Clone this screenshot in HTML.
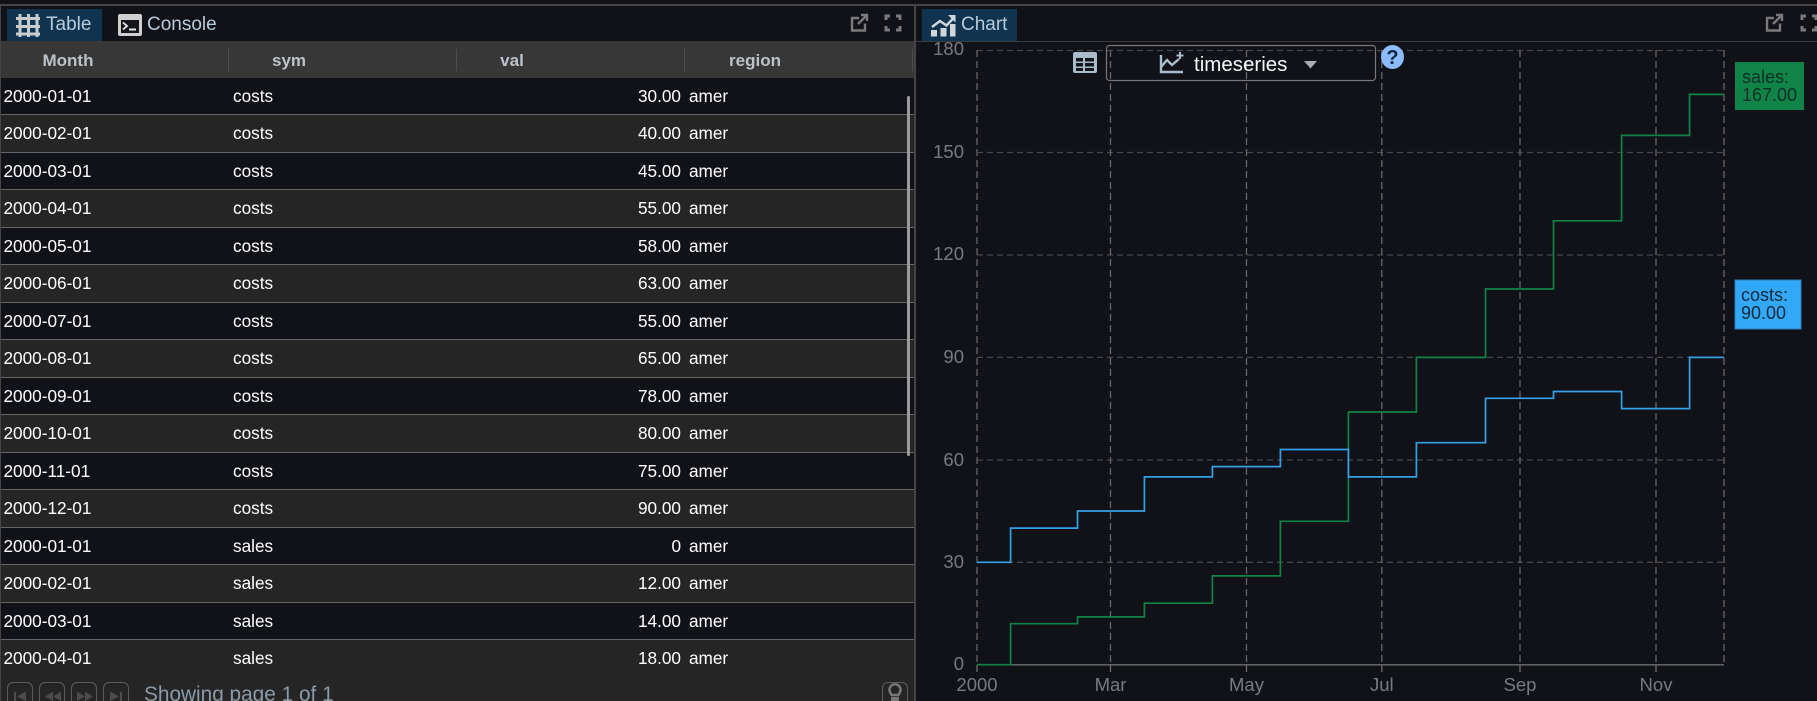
<!DOCTYPE html>
<html><head><meta charset="utf-8"><style>
html,body{margin:0;padding:0;width:1817px;height:701px;overflow:hidden;background:#101218}
body{position:relative;font-family:"Liberation Sans",sans-serif;color:#fff}
.a{position:absolute}
.tab{position:absolute;top:9px;height:32px;line-height:32px;font-size:19px;color:#b6cbdc;white-space:nowrap}
.r{position:absolute;left:1px;width:913px;height:37.5px;box-sizing:border-box;border-top:1px solid #666;background:#101218}
.r.e{background:#252525}
.r span{position:absolute;top:1px;line-height:35px;font-size:17.2px;color:#fff;white-space:nowrap}
.r .d{left:2.5px}.r .s{left:232px}.r .v{right:233px}.r .g{left:688px}
.h{position:absolute;top:42px;height:37px;line-height:37px;font-size:17px;font-weight:bold;color:#bcc2c8;text-align:center;width:228px}
.sep{position:absolute;top:49px;height:22px;width:1px;background:#4d4d4d}
.pb{position:absolute;top:682px;width:24px;height:30px;border:1px solid #5a5a5a;border-radius:6px}
svg{position:absolute;left:0;top:0}
</style></head><body>
<div class="a" style="left:0;top:4px;width:1817px;height:2px;background:#444"></div>
<div class="a" style="left:0;top:6px;width:1px;height:695px;background:#444"></div>
<div class="a" style="left:914px;top:6px;width:2px;height:695px;background:#444"></div>
<div class="a" style="left:916px;top:41px;width:901px;height:1px;background:#3c3c3c"></div>

<div class="a" style="left:7px;top:9px;width:95px;height:32px;background:#10344f"></div>
<div class="a" style="left:922px;top:9px;width:95px;height:32px;background:#10344f"></div>
<div class="tab" style="left:46px">Table</div>
<div class="tab" style="left:147px">Console</div>
<div class="tab" style="left:961px">Chart</div>

<div class="a" style="left:1px;top:41px;width:913px;height:37px;background:#373737"></div>
<div class="h" style="left:-46px">Month</div>
<div class="h" style="left:175px">sym</div>
<div class="h" style="left:398px">val</div>
<div class="h" style="left:641px">region</div>
<div class="sep" style="left:228px"></div><div class="sep" style="left:456px"></div><div class="sep" style="left:684px"></div><div class="sep" style="left:912px"></div>

<div class="r" style="top:78px;height:36px;border-top:0"><span class="d">2000-01-01</span><span class="s">costs</span><span class="v">30.00</span><span class="g">amer</span></div>
<div class="r e" style="top:114px"><span class="d">2000-02-01</span><span class="s">costs</span><span class="v">40.00</span><span class="g">amer</span></div>
<div class="r" style="top:151.5px"><span class="d">2000-03-01</span><span class="s">costs</span><span class="v">45.00</span><span class="g">amer</span></div>
<div class="r e" style="top:189px"><span class="d">2000-04-01</span><span class="s">costs</span><span class="v">55.00</span><span class="g">amer</span></div>
<div class="r" style="top:226.5px"><span class="d">2000-05-01</span><span class="s">costs</span><span class="v">58.00</span><span class="g">amer</span></div>
<div class="r e" style="top:264px"><span class="d">2000-06-01</span><span class="s">costs</span><span class="v">63.00</span><span class="g">amer</span></div>
<div class="r" style="top:301.5px"><span class="d">2000-07-01</span><span class="s">costs</span><span class="v">55.00</span><span class="g">amer</span></div>
<div class="r e" style="top:339px"><span class="d">2000-08-01</span><span class="s">costs</span><span class="v">65.00</span><span class="g">amer</span></div>
<div class="r" style="top:376.5px"><span class="d">2000-09-01</span><span class="s">costs</span><span class="v">78.00</span><span class="g">amer</span></div>
<div class="r e" style="top:414px"><span class="d">2000-10-01</span><span class="s">costs</span><span class="v">80.00</span><span class="g">amer</span></div>
<div class="r" style="top:451.5px"><span class="d">2000-11-01</span><span class="s">costs</span><span class="v">75.00</span><span class="g">amer</span></div>
<div class="r e" style="top:489px"><span class="d">2000-12-01</span><span class="s">costs</span><span class="v">90.00</span><span class="g">amer</span></div>
<div class="r" style="top:526.5px"><span class="d">2000-01-01</span><span class="s">sales</span><span class="v">0</span><span class="g">amer</span></div>
<div class="r e" style="top:564px"><span class="d">2000-02-01</span><span class="s">sales</span><span class="v">12.00</span><span class="g">amer</span></div>
<div class="r" style="top:601.5px"><span class="d">2000-03-01</span><span class="s">sales</span><span class="v">14.00</span><span class="g">amer</span></div>
<div class="r e" style="top:639px;height:62px"><span class="d">2000-04-01</span><span class="s">sales</span><span class="v">18.00</span><span class="g">amer</span></div>

<div class="a" style="left:907px;top:96px;width:3px;height:360px;background:#9a9a9a;border-radius:2px"></div>

<div class="pb" style="left:7px"></div><div class="pb" style="left:39px"></div><div class="pb" style="left:71px"></div><div class="pb" style="left:103px"></div>
<div class="pb" style="left:882px"></div>
<div class="a" style="left:144px;top:683px;font-size:20.8px;line-height:24px;color:#8a9aa8;white-space:nowrap">Showing page 1 of 1</div>

<svg width="1817" height="701" viewBox="0 0 1817 701" font-family="'Liberation Sans',sans-serif">
<!-- pager glyphs -->
<g fill="#4c4c4c">
<path d="M14 692h2v9h-2zM17 696.500l9-5v9.500z"/>
<path d="M45 696.500l8-5v9.500zM53 696.500l8-5v9.500z"/>
<path d="M77 691.500l8 5-8 4.500zM85 691.500l8 5-8 4.500z"/>
<path d="M110 691.500l9 5-9 4.500zM120 692h2v9h-2z"/>
</g>
<path d="M890 692a5.500 5.500 0 1 1 10 0l-1.500 3h-7z" fill="none" stroke="#777" stroke-width="2.500"/>
<path d="M891 697h8v4h-8z" fill="#777"/>

<!-- grid tab icon -->
<g stroke="#c9cdd0" stroke-width="3" fill="none">
<path d="M20 14v23M28.500 14v23M37 14v23M16 18.500h24M16 26.500h24M16 34h24"/>
</g>
<!-- console icon -->
<rect x="118" y="14" width="24" height="22" rx="2" fill="#cfcfcf"/>
<rect x="121" y="20" width="18" height="13" fill="#14161b"/>
<path d="M123 22.500l4 3.500-4 3.500" stroke="#e8e8e8" stroke-width="1.800" fill="none"/>
<path d="M129 29.500h7" stroke="#e8e8e8" stroke-width="2"/>
<!-- chart tab icon -->
<g fill="#d2d6d9">
<rect x="931" y="30" width="6" height="6.500"/>
<rect x="940.500" y="28" width="6" height="8.500"/>
<rect x="950" y="24" width="5.500" height="12.500"/>
</g>
<path d="M932 27l8-6 6.500 4.500 8-8.500" fill="none" stroke="#d2d6d9" stroke-width="2.500"/>
<path d="M948 15h7.500v7.500z" fill="#d2d6d9"/>

<!-- external / fullscreen -->
<g fill="none" stroke="#7a7a7a" stroke-width="2.400">
<path d="M859 18h-7v12.500h13v-7M858 24l9-9M861 15h6v6"/>
<path d="M886 20v-4h4M896 16h4v4M900 26v4h-4M890 30h-4v-4" stroke-width="3"/>
<path d="M1774 18h-7v12.500h13v-7M1773 24l9-9M1776 15h6v6"/>
<path d="M1802 20v-4h4M1812 16h4v4M1816 26v4h-4M1806 30h-4v-4" stroke-width="3"/>
</g>

<!-- grid -->
<g stroke="#474747" stroke-width="1.300" stroke-dasharray="6 4" fill="none">
<path d="M977 50.500H1724M977 152.500H1724M977 255H1724M977 357.400H1724M977 460H1724M977 562.300H1724"/>
</g>
<g stroke="#666" stroke-width="1.300" stroke-dasharray="7 4" fill="none">
<path d="M977 50V665M1110.500 50V665M1246.500 50V665M1381.800 50V665M1520 50V665M1656 50V665M1724 50V665"/>
</g>
<path d="M977 664.800H1724" stroke="#6e6e6e" stroke-width="1.400"/>
<path d="M977 665v7M1110.500 665v7M1246.500 665v7M1381.800 665v7M1520 665v7M1656 665v7" stroke="#6e6e6e" stroke-width="1.300"/>

<!-- axis labels -->
<g fill="#777b80" font-size="18.500" text-anchor="end">
<text x="964" y="55">180</text>
<text x="964" y="158">150</text>
<text x="964" y="260">120</text>
<text x="964" y="363">90</text>
<text x="964" y="466">60</text>
<text x="964" y="568">30</text>
<text x="964" y="670">0</text>
</g>
<g fill="#777b80" font-size="18.500" text-anchor="middle">
<text x="977" y="691">2000</text>
<text x="1110.500" y="691">Mar</text>
<text x="1246.500" y="691">May</text>
<text x="1381.800" y="691">Jul</text>
<text x="1520" y="691">Sep</text>
<text x="1656" y="691">Nov</text>
</g>

<!-- series -->
<path fill="none" stroke="#0f8446" stroke-width="1.700" d="M977 664.700H1010.600V623.700H1077.500V616.900H1144.400V603.200H1212.400V575.900H1280.400V521.300H1348.400V412H1416.400V357.400H1485.500V289H1553.500V220.800H1621.600V135.400H1689.600V94.400H1724"/>
<path fill="none" stroke="#34a0e8" stroke-width="1.700" d="M977 562.300H1010.600V528.100H1077.500V511H1144.400V476.900H1212.400V466.600H1280.400V449.500H1348.400V476.900H1416.400V442.700H1485.500V398.300H1553.500V391.500H1621.600V408.600H1689.600V357.400H1724"/>

<!-- toolbar -->
<rect x="1073" y="52" width="24" height="21" rx="2" fill="#a9bccb"/>
<g fill="#14161b">
<rect x="1076" y="58" width="7" height="3.500"/><rect x="1085" y="58" width="9" height="3.500"/>
<rect x="1076" y="63" width="7" height="3.500"/><rect x="1085" y="63" width="9" height="3.500"/>
<rect x="1076" y="68" width="7" height="3"/><rect x="1085" y="68" width="9" height="3"/>
</g>
<rect x="1106.500" y="45.500" width="269" height="35" rx="3" fill="none" stroke="#777" stroke-width="1.200"/>
<g fill="none" stroke="#a9bccb" stroke-width="2.400">
<path d="M1161 55v17h22"/>
<path d="M1161 67l6-7 5 5 7-6"/>
<path d="M1180 52v7M1176.500 55.500h7" stroke-width="2"/>
</g>
<text x="1194" y="71" font-size="20.500" fill="#f4f6f8">timeseries</text>
<path d="M1304 61h13l-6.500 7.500z" fill="#a8adb2"/>
<ellipse cx="1392.500" cy="57" rx="11.500" ry="12" fill="#8bbcff"/>
<text x="1392.500" y="64" font-size="20" font-weight="bold" fill="#10233f" text-anchor="middle">?</text>

<!-- value labels -->
<rect x="1735" y="62" width="69" height="48" fill="#0f8446"/>
<text font-size="18" fill="#0b2f27"><tspan x="1742" y="83">sales:</tspan><tspan x="1742" y="101">167.00</tspan></text>
<rect x="1735" y="280" width="66" height="49" fill="#34a8f8" stroke="#2b7fb8" stroke-width="1"/>
<text font-size="18" fill="#0f2a38"><tspan x="1741" y="301">costs:</tspan><tspan x="1741" y="319">90.00</tspan></text>
</svg>
</body></html>
